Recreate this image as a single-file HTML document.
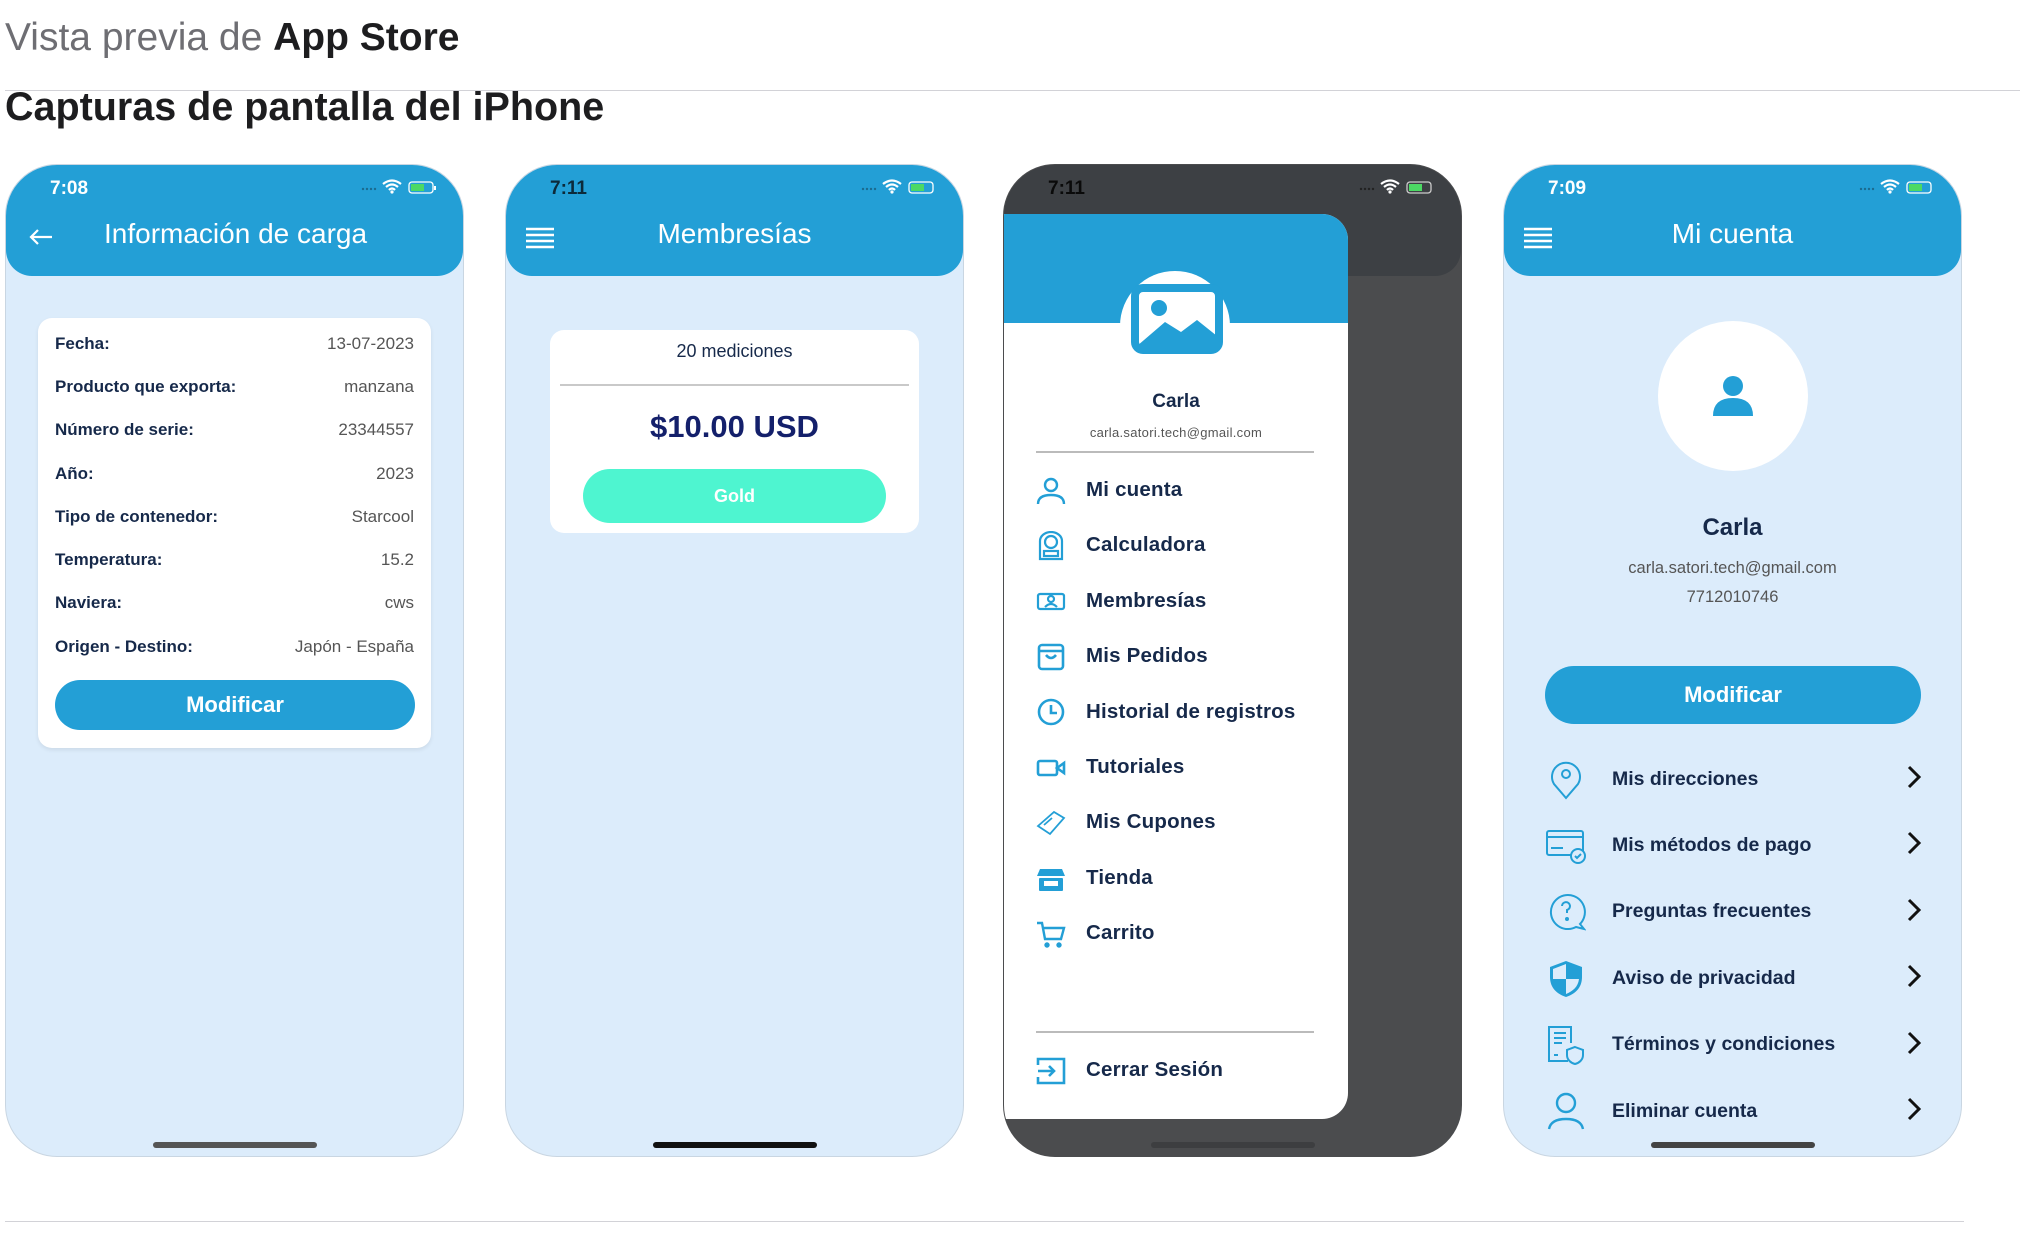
<!DOCTYPE html>
<html><head><meta charset="utf-8"><style>
*{margin:0;padding:0;box-sizing:border-box}
body{width:2020px;height:1236px;background:#fff;font-family:"Liberation Sans",sans-serif;position:relative;overflow:hidden;color:#1d1d1f}
.abs{position:absolute}
.h1{left:5px;top:16px;font-size:39px;color:#6e6e73}
.h1 b{color:#1d1d1f;font-weight:600}
.hr{left:5px;right:0;top:90px;height:1px;background:#d2d2d7}
.h2{left:5px;top:85px;font-size:39.5px;font-weight:bold}
.phone{position:absolute;top:164px;width:459px;height:993px;border-radius:52px;background:#dcecfb;overflow:hidden;border:1.5px solid #c9d6e2}
.hdr{position:absolute;left:0;top:0;width:100%;height:111px;background:#239fd6;border-radius:0 0 26px 26px}
.time{position:absolute;left:44px;top:13px;font-size:19px;color:#fff;font-weight:600}
.stat{position:absolute;right:24px;top:14px}
.title{position:absolute;left:0;width:100%;top:53px;text-align:center;font-size:28px;color:#fff}
.home{position:absolute;left:147px;top:977px;width:164px;height:6px;border-radius:3px;background:#555}
.row{position:absolute;left:49px;right:49px;font-size:17px;color:#16294a;display:flex;justify-content:space-between}
.row span:first-child{font-weight:bold}
.row span:last-child{color:#555}
.btn{position:absolute;background:#239fd6;color:#fff;font-weight:bold;text-align:center;border-radius:30px}
.mi{position:absolute;left:82px;font-size:20.5px;color:#16294a;font-weight:600;letter-spacing:.2px}
.ic{position:absolute;left:32px;width:30px;height:30px}
.r4{position:absolute;left:108px;font-size:19.5px;color:#16294a;font-weight:600}
.chev{position:absolute;left:400px;width:20px;height:26px}
.ic4{position:absolute;left:42px;width:40px;height:40px}
</style></head><body>
<div class="abs h1">Vista previa de <b>App Store</b></div>
<div class="abs hr"></div>
<div class="abs h2">Capturas de pantalla del iPhone</div>
<div class="abs" style="left:5px;width:1959px;top:1221px;height:1px;background:#d2d2d7"></div>

<!-- Phone 1 -->
<div class="phone" style="left:5px">
 <div class="hdr"><div class="time">7:08</div>
  <svg class="stat" width="80" height="16" viewBox="0 0 80 16"><g fill="#1b6b8f"><circle cx="4" cy="10" r="1.2"/><circle cx="8" cy="10" r="1.2"/><circle cx="12" cy="10" r="1.2"/><circle cx="16" cy="10" r="1.2"/></g><path d="M24 5q9-7 18 0M27 8q6-5 12 0M30 11q3-3 6 0" stroke="#fff" stroke-width="2.2" fill="none"/><circle cx="33" cy="13" r="1.6" fill="#fff"/><rect x="50" y="3" width="24" height="11" rx="3" fill="none" stroke="#fff" stroke-width="1.3"/><rect x="52" y="5" width="13" height="7" fill="#4cd964"/><rect x="75" y="7" width="2" height="4" fill="#fff"/></svg>
  <svg class="abs" style="left:22px;top:62px" width="26" height="20" viewBox="0 0 26 20"><path d="M24 10H3M10 3L3 10l7 7" stroke="#fff" stroke-width="2.2" fill="none"/></svg>
  <div class="title" style="text-align:left;left:98px">Información de carga</div></div>
 <div class="abs" style="left:32px;top:153px;width:393px;height:430px;background:#fff;border-radius:14px;box-shadow:0 2px 4px rgba(0,0,0,.08)"></div>
 <div class="row" style="top:169px"><span>Fecha:</span><span>13-07-2023</span></div>
 <div class="row" style="top:212px"><span>Producto que exporta:</span><span>manzana</span></div>
 <div class="row" style="top:255px"><span>Número de serie:</span><span>23344557</span></div>
 <div class="row" style="top:299px"><span>Año:</span><span>2023</span></div>
 <div class="row" style="top:342px"><span>Tipo de contenedor:</span><span>Starcool</span></div>
 <div class="row" style="top:385px"><span>Temperatura:</span><span>15.2</span></div>
 <div class="row" style="top:428px"><span>Naviera:</span><span>cws</span></div>
 <div class="row" style="top:472px"><span>Origen - Destino:</span><span>Japón - España</span></div>
 <div class="btn" style="left:49px;width:360px;top:515px;height:50px;line-height:50px;font-size:22px">Modificar</div>
 <div class="home"></div>
</div>

<!-- Phone 2 -->
<div class="phone" style="left:505px">
 <div class="hdr"><div class="time" style="color:#0c2a3a">7:11</div>
  <svg class="stat" width="80" height="16" viewBox="0 0 80 16"><g fill="#1b6b8f"><circle cx="4" cy="10" r="1.2"/><circle cx="8" cy="10" r="1.2"/><circle cx="12" cy="10" r="1.2"/><circle cx="16" cy="10" r="1.2"/></g><path d="M24 5q9-7 18 0M27 8q6-5 12 0M30 11q3-3 6 0" stroke="#fff" stroke-width="2.2" fill="none"/><circle cx="33" cy="13" r="1.6" fill="#fff"/><rect x="50" y="3" width="24" height="11" rx="3" fill="none" stroke="#fff" stroke-width="1.3"/><rect x="52" y="5" width="13" height="7" fill="#4cd964"/></svg>
  <svg class="abs" style="left:20px;top:61px" width="28" height="24" viewBox="0 0 28 24"><path d="M0 3H28M0 9H28M0 15H28M0 21H28" stroke="#fff" stroke-width="2.4"/></svg>
  <div class="title">Membresías</div></div>
 <div class="abs" style="left:44px;top:165px;width:369px;height:203px;background:#fff;border-radius:14px"></div>
 <div class="abs" style="left:44px;width:369px;top:176px;text-align:center;font-size:18px;color:#16294a">20 mediciones</div>
 <div class="abs" style="left:54px;width:349px;top:219px;height:2px;background:#c9c9c9"></div>
 <div class="abs" style="left:44px;width:369px;top:244px;text-align:center;font-size:31px;font-weight:bold;color:#14206b">$10.00 USD</div>
 <div class="btn" style="left:77px;width:303px;top:304px;height:54px;line-height:54px;font-size:18px;background:#4ef5d0">Gold</div>
 <div class="home" style="background:#111"></div>
</div>

<!-- Phone 3 -->
<div class="phone" style="left:1003px;background:#4b4c4e;border-color:#4b4c4e">
 <div class="hdr" style="background:#3d4044"><div class="time" style="color:#0a0a0a">7:11</div>
  <svg class="stat" width="80" height="16" viewBox="0 0 80 16"><g fill="#222"><circle cx="4" cy="10" r="1.2"/><circle cx="8" cy="10" r="1.2"/><circle cx="12" cy="10" r="1.2"/><circle cx="16" cy="10" r="1.2"/></g><path d="M24 5q9-7 18 0M27 8q6-5 12 0M30 11q3-3 6 0" stroke="#fff" stroke-width="2.2" fill="none"/><circle cx="33" cy="13" r="1.6" fill="#fff"/><rect x="50" y="3" width="24" height="11" rx="3" fill="none" stroke="#ccc" stroke-width="1.3"/><rect x="52" y="5" width="13" height="7" fill="#4cd964"/></svg></div>
 <div class="abs" style="left:0;top:49px;width:344px;height:905px;background:#fff;border-radius:0 26px 26px 0;overflow:hidden">
  <div class="abs" style="left:0;top:0;width:100%;height:109px;background:#239fd6"></div>
  <div class="abs" style="left:116px;top:57px;width:110px;height:110px;border-radius:50%;background:#fff"></div>
  <svg class="abs" style="left:127px;top:70px" width="92" height="70" viewBox="0 0 92 70"><rect x="4" y="4" width="84" height="62" rx="8" fill="none" stroke="#239fd6" stroke-width="8"/><circle cx="28" cy="24" r="8" fill="#239fd6"/><path d="M6 62L34 38 50 48 66 36 86 52V62Z" fill="#239fd6"/></svg>
  <div class="abs" style="left:0;width:100%;top:177px;text-align:center;font-size:19px;font-weight:bold;color:#16294a">Carla</div>
  <div class="abs" style="left:0;width:100%;top:211px;text-align:center;font-size:13px;color:#555;letter-spacing:.3px">carla.satori.tech@gmail.com</div>
  <div class="abs" style="left:32px;width:278px;top:237px;height:2px;background:#bbb"></div>
  <div class="abs" style="left:32px;width:278px;top:817px;height:2px;background:#bbb"></div>
 </div>
 <svg class="ic" style="top:311px" viewBox="0 0 30 30" fill="none" stroke="#239fd6" stroke-width="2.4"><circle cx="15" cy="9" r="6"/><path d="M2 28q0-9 13-9t13 9"/></svg>
 <div class="mi" style="top:313px">Mi cuenta</div>
 <svg class="ic" style="top:366px" viewBox="0 0 30 30" fill="none" stroke="#239fd6" stroke-width="2.2"><path d="M4 28V10a11 9 0 0 1 22 0v18z"/><circle cx="15" cy="11" r="6"/><rect x="8" y="20" width="14" height="5"/></svg>
 <div class="mi" style="top:368px">Calculadora</div>
 <svg class="ic" style="top:421px" viewBox="0 0 30 30" fill="none" stroke="#239fd6" stroke-width="2.2"><rect x="2" y="8" width="26" height="15" rx="2"/><circle cx="15" cy="13" r="3"/><path d="M9 21q6-6 12 0"/></svg>
 <div class="mi" style="top:424px">Membresías</div>
 <svg class="ic" style="top:477px" viewBox="0 0 30 30" fill="none" stroke="#239fd6" stroke-width="2.6"><rect x="3" y="3" width="24" height="24" rx="3"/><path d="M3 9H27M10 13q5 6 10 0"/></svg>
 <div class="mi" style="top:479px">Mis Pedidos</div>
 <svg class="ic" style="top:532px" viewBox="0 0 30 30" fill="none" stroke="#239fd6" stroke-width="2.6"><circle cx="15" cy="15" r="12"/><path d="M15 8V16H21"/></svg>
 <div class="mi" style="top:535px">Historial de registros</div>
 <svg class="ic" style="top:588px" viewBox="0 0 30 30" fill="none" stroke="#239fd6" stroke-width="2.6"><rect x="2" y="8" width="19" height="14" rx="2"/><path d="M21 15l7-5v10z"/></svg>
 <div class="mi" style="top:590px">Tutoriales</div>
 <svg class="ic" style="top:643px" viewBox="0 0 30 30" fill="none" stroke="#239fd6" stroke-width="1.8"><path d="M2 18L18 4l10 6-14 16z"/><path d="M8 17l8-7"/></svg>
 <div class="mi" style="top:645px">Mis Cupones</div>
 <svg class="ic" style="top:699px" viewBox="0 0 30 30" fill="#239fd6"><path d="M4 5h22l3 7H1z"/><rect x="3" y="14" width="24" height="13" rx="1"/><rect x="8" y="17" width="14" height="5" fill="#fff"/></svg>
 <div class="mi" style="top:701px">Tienda</div>
 <svg class="ic" style="top:754px" viewBox="0 0 30 30" fill="none" stroke="#239fd6" stroke-width="2.4"><path d="M1 4h5l3 16h16l3-11H8"/><circle cx="11" cy="26" r="1.5" fill="#239fd6"/><circle cx="23" cy="26" r="1.5" fill="#239fd6"/></svg>
 <div class="mi" style="top:756px">Carrito</div>
 <svg class="ic" style="top:891px" viewBox="0 0 30 30" fill="none" stroke="#239fd6" stroke-width="2.6"><path d="M2 9V3h26v24H2v-6M2 15h16M13 10l5 5-5 5"/></svg>
 <div class="mi" style="top:893px">Cerrar Sesión</div>
 <div class="home" style="background:#3d3e40"></div>
</div>

<!-- Phone 4 -->
<div class="phone" style="left:1503px">
 <div class="hdr"><div class="time">7:09</div>
  <svg class="stat" width="80" height="16" viewBox="0 0 80 16"><g fill="#1b6b8f"><circle cx="4" cy="10" r="1.2"/><circle cx="8" cy="10" r="1.2"/><circle cx="12" cy="10" r="1.2"/><circle cx="16" cy="10" r="1.2"/></g><path d="M24 5q9-7 18 0M27 8q6-5 12 0M30 11q3-3 6 0" stroke="#fff" stroke-width="2.2" fill="none"/><circle cx="33" cy="13" r="1.6" fill="#fff"/><rect x="50" y="3" width="24" height="11" rx="3" fill="none" stroke="#fff" stroke-width="1.3"/><rect x="52" y="5" width="13" height="7" fill="#4cd964"/></svg>
  <svg class="abs" style="left:20px;top:61px" width="28" height="24" viewBox="0 0 28 24"><path d="M0 3H28M0 9H28M0 15H28M0 21H28" stroke="#fff" stroke-width="2.4"/></svg>
  <div class="title">Mi cuenta</div></div>
 <div class="abs" style="left:154px;top:156px;width:150px;height:150px;border-radius:50%;background:#fff"></div>
 <svg class="abs" style="left:207px;top:209px" width="44" height="44" viewBox="0 0 44 44" fill="#239fd6"><circle cx="22" cy="12" r="10"/><path d="M2 42q0-18 20-18t20 18z"/></svg>
 <div class="abs" style="left:0;width:100%;top:349px;text-align:center;font-size:24px;font-weight:bold;color:#16294a">Carla</div>
 <div class="abs" style="left:0;width:100%;top:394px;text-align:center;font-size:16.5px;color:#555">carla.satori.tech@gmail.com</div>
 <div class="abs" style="left:0;width:100%;top:423px;text-align:center;font-size:16.5px;color:#555">7712010746</div>
 <div class="btn" style="left:41px;width:376px;top:501px;height:58px;line-height:58px;font-size:22px">Modificar</div>
 <svg class="ic4" style="top:595px" viewBox="0 0 40 40" fill="none" stroke="#239fd6" stroke-width="2"><path d="M20 38L8 24a14 14 0 1 1 24 0z"/><circle cx="20" cy="14" r="4"/></svg>
 <div class="r4" style="top:603px">Mis direcciones</div>
 <svg class="ic4" style="top:661px" viewBox="0 0 40 40" fill="none" stroke="#239fd6" stroke-width="2"><rect x="1" y="5" width="36" height="24" rx="2"/><path d="M1 11H37M5 22h12"/><circle cx="32" cy="30" r="7" fill="#dcecfb"/><path d="M29 30l2 2 4-4"/></svg>
 <div class="r4" style="top:669px">Mis métodos de pago</div>
 <svg class="ic4" style="top:727px" viewBox="0 0 40 40" fill="none" stroke="#239fd6" stroke-width="2"><path d="M34 32A17 17 0 1 0 30 35l8 2z"/><path d="M16 14a4 4 0 1 1 5 4v3"/><circle cx="21" cy="27" r="1" fill="#239fd6"/></svg>
 <div class="r4" style="top:735px">Preguntas frecuentes</div>
 <svg class="ic4" style="top:794px" viewBox="0 0 40 40"><path d="M20 2L36 8v10c0 11-7 17-16 20C11 35 4 29 4 18V8z" fill="#239fd6"/><path d="M20 20H33C32 28 27 32 20 35zM20 20H7V10l13-5z" fill="#dcecfb"/></svg>
 <div class="r4" style="top:802px">Aviso de privacidad</div>
 <svg class="ic4" style="top:860px" viewBox="0 0 40 40" fill="none" stroke="#239fd6" stroke-width="2"><path d="M22 36H3V2h22v16"/><path d="M8 8h12M8 13h12M8 18h8M8 30h4"/><path d="M29 22l8 3v5c0 5-4 8-8 9-4-1-8-4-8-9v-5z" fill="#dcecfb"/></svg>
 <div class="r4" style="top:868px">Términos y condiciones</div>
 <svg class="ic4" style="top:926px" viewBox="0 0 40 40" fill="none" stroke="#239fd6" stroke-width="2.4"><circle cx="20" cy="12" r="9"/><path d="M3 38q2-10 17-10t17 10"/></svg>
 <div class="r4" style="top:935px">Eliminar cuenta</div>
 <svg class="chev" style="top:599px" viewBox="0 0 20 26"><path d="M5 3l10 10-10 10" stroke="#111" stroke-width="3" fill="none"/></svg>
 <svg class="chev" style="top:665px" viewBox="0 0 20 26"><path d="M5 3l10 10-10 10" stroke="#111" stroke-width="3" fill="none"/></svg>
 <svg class="chev" style="top:732px" viewBox="0 0 20 26"><path d="M5 3l10 10-10 10" stroke="#111" stroke-width="3" fill="none"/></svg>
 <svg class="chev" style="top:798px" viewBox="0 0 20 26"><path d="M5 3l10 10-10 10" stroke="#111" stroke-width="3" fill="none"/></svg>
 <svg class="chev" style="top:865px" viewBox="0 0 20 26"><path d="M5 3l10 10-10 10" stroke="#111" stroke-width="3" fill="none"/></svg>
 <svg class="chev" style="top:931px" viewBox="0 0 20 26"><path d="M5 3l10 10-10 10" stroke="#111" stroke-width="3" fill="none"/></svg>
 <div class="home" style="background:#444"></div>
</div>
</body></html>
